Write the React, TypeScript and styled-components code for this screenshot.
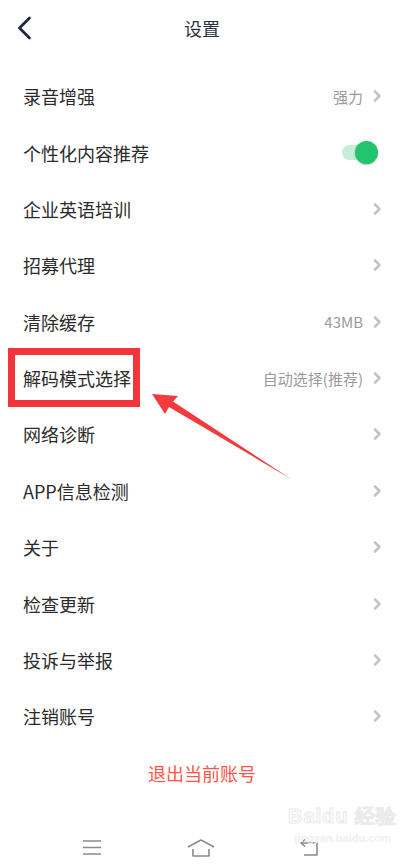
import React from "react";
import styled, { createGlobalStyle } from "styled-components";

const Global = createGlobalStyle`
  html, body { margin: 0; padding: 0; background: #ffffff; }
  body { font-family: "Noto Sans CJK SC", "Noto Sans", sans-serif; -webkit-font-smoothing: antialiased; }
  *, *::before, *::after { box-sizing: border-box; }
`;

const Page = styled.div`
  position: relative;
  width: 404px;
  height: 865px;
  overflow: hidden;
  background: #ffffff;
  display: flex;
  flex-direction: column;
`;

const Header = styled.header`
  height: 56px;
  display: grid;
  grid-template-columns: 1fr auto 1fr;
  align-items: center;
`;

const BackButton = styled.div`
  width: 40px;
  height: 40px;
  margin-left: 16px;
  display: flex;
  align-items: center;
  justify-content: flex-start;
  color: #1e283a;
`;

const Title = styled.h1`
  margin: 0;
  font-size: 18px;
  font-weight: 400;
  color: #2c3340;
  line-height: 1;
`;

const List = styled.div`
  padding-top: 12px;
  display: flex;
  flex-direction: column;
`;

const Row = styled.div`
  height: 56.4px;
  display: flex;
  align-items: center;
  padding: 0 22px 0 23px;
`;

const Label = styled.span<{ $highlight?: boolean }>`
  position: relative;
  font-size: 18px;
  color: #2b2b2b;
  line-height: 1;
  flex: 1;
  ${(p) =>
    p.$highlight
      ? `
  &::before {
    content: "";
    position: absolute;
    left: -15px;
    width: 132px;
    top: -21px;
    height: 59px;
    border: 7px solid #f2353a;
    pointer-events: none;
  }`
      : ""}
`;

const LabelText = styled.span`
  position: relative;
`;

const Value = styled.span`
  font-size: 15px;
  color: #9a9a9a;
  line-height: 1;
  margin-right: 10px;
`;

const ChevronBox = styled.span`
  width: 9px;
  height: 14px;
  display: inline-flex;
  align-items: center;
  justify-content: center;
`;

const Chevron = () => (
  <ChevronBox>
    <svg width="9" height="14" viewBox="0 0 9 14">
      <path d="M2 2.5 L6.5 7 L2 11.5" fill="none" stroke="#c4c4c4" strokeWidth="2.6" strokeLinecap="round" strokeLinejoin="round" />
    </svg>
  </ChevronBox>
);

const Toggle = styled.span`
  position: relative;
  width: 36px;
  height: 24px;
  margin-right: 4px;
  display: inline-flex;
  align-items: center;
`;

const Track = styled.span`
  width: 28px;
  height: 15px;
  border-radius: 8px;
  background: #c5eed7;
`;

const Thumb = styled.span`
  position: absolute;
  right: 0;
  top: 0;
  width: 23px;
  height: 23px;
  border-radius: 50%;
  background: #22c56f;
  box-shadow: 0 1px 2px rgba(0, 0, 0, 0.25);
`;

const LogoutRow = styled.div`
  height: 56.4px;
  display: flex;
  align-items: center;
  justify-content: center;
  font-size: 18px;
  color: #ff5548;
`;

const NavBar = styled.nav`
  margin-top: 30px;
  height: 34px;
  display: grid;
  grid-template-columns: repeat(3, 1fr);
  align-items: center;
  justify-items: center;
  padding: 0 40px 0 38px;
`;

const NavIcon = styled.span`
  display: inline-flex;
  color: #8a8a8a;
`;

const Arrow = styled.svg`
  position: absolute;
  left: 0;
  top: 0;
  pointer-events: none;
`;

const Watermark = styled.div`
  position: absolute;
  left: 288px;
  top: 806px;
  display: flex;
  flex-direction: column;
  align-items: center;
  font-family: "Liberation Sans", Arial, sans-serif;
  pointer-events: none;
`;

const WmTop = styled.span`
  font-size: 20px;
  font-weight: 700;
  letter-spacing: 1px;
  line-height: 1;
  -webkit-text-stroke: 1px #ebebeb;
  color: #fdfdfd;
`;

const WmBottom = styled.span`
  font-size: 11px;
  font-weight: 700;
  margin-top: 6px;
  color: #f0f0f0;
`;

type Item = { label: string; value?: string; toggle?: boolean; highlight?: boolean };

const items: Item[] = [
  { label: "录音增强", value: "强力" },
  { label: "个性化内容推荐", toggle: true },
  { label: "企业英语培训" },
  { label: "招募代理" },
  { label: "清除缓存", value: "43MB" },
  { label: "解码模式选择", value: "自动选择(推荐)", highlight: true },
  { label: "网络诊断" },
  { label: "APP信息检测" },
  { label: "关于" },
  { label: "检查更新" },
  { label: "投诉与举报" },
  { label: "注销账号" },
];

export default function App() {
  return (
    <>
      <Global />
      <Page>
        <Header>
          <BackButton>
            <svg width="20" height="26" viewBox="0 0 20 26">
              <path d="M13.5 3 L3.5 13 L13.5 23" fill="none" stroke="currentColor" strokeWidth="2.8" strokeLinecap="round" strokeLinejoin="round" />
            </svg>
          </BackButton>
          <Title>设置</Title>
          <span />
        </Header>
        <List>
          {items.map((it) => (
            <Row key={it.label}>
              <Label $highlight={it.highlight}>
                <LabelText>{it.label}</LabelText>
              </Label>
              {it.value && <Value>{it.value}</Value>}
              {it.toggle ? (
                <Toggle>
                  <Track />
                  <Thumb />
                </Toggle>
              ) : (
                <Chevron />
              )}
            </Row>
          ))}
          <LogoutRow>退出当前账号</LogoutRow>
        </List>
        <NavBar>
          <NavIcon>
            <svg width="22" height="18" viewBox="0 0 22 18">
              <path d="M2 2 H20 M2 8.5 H20 M2 15 H20" stroke="currentColor" strokeWidth="1.6" />
            </svg>
          </NavIcon>
          <NavIcon>
            <svg width="30" height="20" viewBox="0 0 30 20">
              <path d="M2 9 L15 2 L28 9" fill="none" stroke="currentColor" strokeWidth="1.6" strokeLinejoin="round" />
              <path d="M7 11 V18 H23 V11" fill="none" stroke="currentColor" strokeWidth="1.6" strokeLinejoin="round" />
            </svg>
          </NavIcon>
          <NavIcon>
            <svg width="24" height="20" viewBox="0 0 24 20">
              <path d="M3 5 H19 V17 H6" fill="none" stroke="currentColor" strokeWidth="1.6" strokeLinejoin="round" />
              <path d="M7 1.5 L3 5 L7 8.5" fill="none" stroke="currentColor" strokeWidth="1.6" strokeLinejoin="round" />
            </svg>
          </NavIcon>
        </NavBar>
        <Watermark>
          <WmTop>Baidu 经验</WmTop>
          <WmBottom>jingyan.baidu.com</WmBottom>
        </Watermark>
        <Arrow width="404" height="865" viewBox="0 0 404 865">
          <polygon points="152,394 178,396 173,401.5 291,479 169,407 165,414" fill="#f53a3d" />
        </Arrow>
      </Page>
    </>
  );
}
